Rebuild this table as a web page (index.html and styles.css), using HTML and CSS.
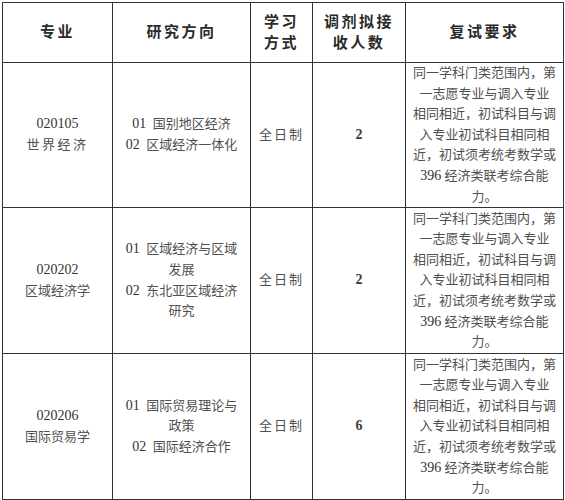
FILE: index.html
```html
<!DOCTYPE html>
<html lang="zh-CN">
<head>
<meta charset="utf-8">
<title>调剂</title>
<link rel="stylesheet" href="styles.css">
</head>
<body>
<table class="grid">
  <colgroup>
    <col class="c1"><col class="c2"><col class="c3"><col class="c4"><col class="c5">
  </colgroup>
  <thead>
    <tr class="head">
      <th>专业</th>
      <th>研究方向</th>
      <th>学习<br>方式</th>
      <th>调剂拟接<br>收人数</th>
      <th>复试要求</th>
    </tr>
  </thead>
  <tbody>
    <tr class="r1">
      <td><span class="num">020105</span><br><span class="wide">世界经济</span></td>
      <td><span class="num">01</span>&nbsp;&nbsp;国别地区经济<br><span class="num">02</span>&nbsp;&nbsp;区域经济一体化</td>
      <td class="mode">全日制</td>
      <td class="cnt"><span class="num">2</span></td>
      <td class="req">同一学科门类范围内，第<br>一志愿专业与调入专业<br>相同相近，初试科目与调<br>入专业初试科目相同相<br>近，初试须考统考数学或<br><span class="num">396</span> 经济类联考综合能<br>力。</td>
    </tr>
    <tr class="r2">
      <td><span class="num">020202</span><br>区域经济学</td>
      <td><span class="num">01</span>&nbsp;&nbsp;区域经济与区域<br>发展<br><span class="num">02</span>&nbsp;&nbsp;东北亚区域经济<br>研究</td>
      <td class="mode">全日制</td>
      <td class="cnt"><span class="num">2</span></td>
      <td class="req">同一学科门类范围内，第<br>一志愿专业与调入专业<br>相同相近，初试科目与调<br>入专业初试科目相同相<br>近，初试须考统考数学或<br><span class="num">396</span> 经济类联考综合能<br>力。</td>
    </tr>
    <tr class="r3">
      <td><span class="num">020206</span><br>国际贸易学</td>
      <td><span class="num">01</span>&nbsp;&nbsp;国际贸易理论与<br>政策<br><span class="num">02</span>&nbsp;&nbsp;国际经济合作</td>
      <td class="mode">全日制</td>
      <td class="cnt"><span class="num">6</span></td>
      <td class="req">同一学科门类范围内，第<br>一志愿专业与调入专业<br>相同相近，初试科目与调<br>入专业初试科目相同相<br>近，初试须考统考数学或<br><span class="num">396</span> 经济类联考综合能<br>力。</td>
    </tr>
  </tbody>
</table>
</body>
</html>
```
FILE: styles.css
```css
html, body {
  margin: 0;
  padding: 0;
  background: #ffffff;
}

body {
  padding: 2px 0 0 2px;
  font-family: "Liberation Serif", "Noto Sans CJK SC", serif;
  color: #3a3a3a;
}

.grid {
  border-collapse: collapse;
  table-layout: fixed;
  width: 561px;
}

.c1 { width: 110px; }
.c2 { width: 138px; }
.c3 { width: 62px; }
.c4 { width: 93px; }
.c5 { width: 158px; }

.grid th,
.grid td {
  border: 1px solid #333333;
  text-align: center;
  vertical-align: middle;
  padding: 0 2px;
  overflow: hidden;
  white-space: nowrap;
}

.grid th {
  font-size: 15px;
  font-weight: 700;
  letter-spacing: 2.5px;
  line-height: 21px;
  color: #2a2a2a;
}

.head { height: 60px; }
.r1 { height: 143px; }
.r2 { height: 146px; }
.r3 { height: 146px; }

.grid td {
  font-size: 13px;
  font-weight: 400;
  line-height: 20.6px;
  color: #505050;
}

.num {
  font-size: 14px;
  color: #333333;
}

.wide {
  letter-spacing: 2.5px;
}

.mode {
  letter-spacing: 2px;
}

.cnt .num {
  font-weight: 700;
  color: #3a3a3a;
}

.req {
  letter-spacing: 0;
}
```
